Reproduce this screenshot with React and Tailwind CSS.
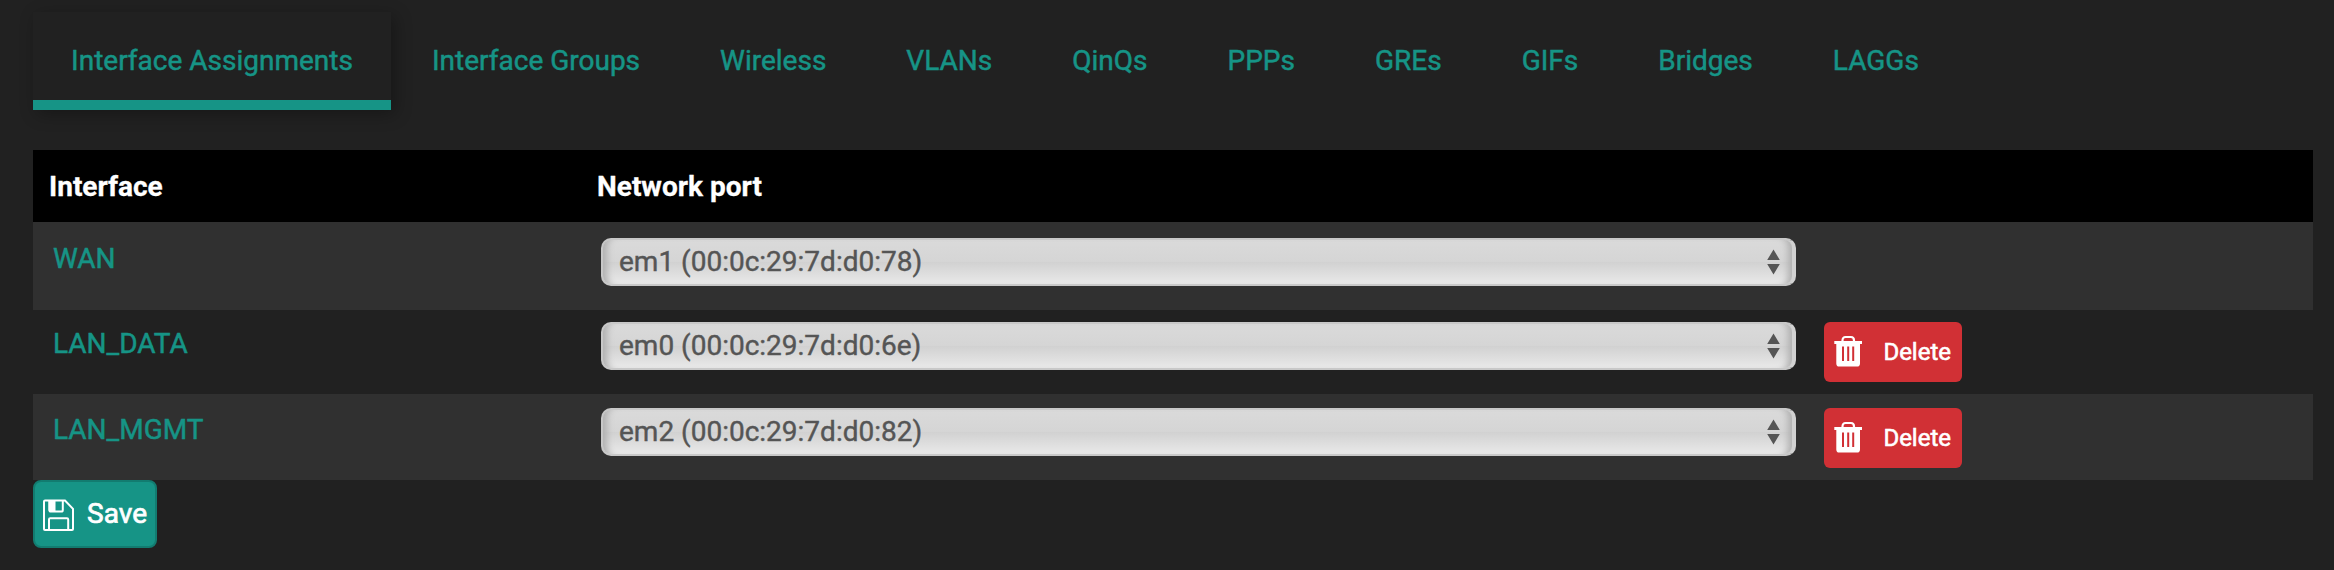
const tabs = ['Interface Groups', 'Wireless', 'VLANs', 'QinQs', 'PPPs', 'GREs', 'GIFs', 'Bridges', 'LAGGs'];

const rows = [
  { name: 'WAN', port: 'em1 (00:0c:29:7d:d0:78)', row: 'h-[88px] bg-[#303030] pt-4', link: 'mt-[5px]', removable: false },
  { name: 'LAN_DATA', port: 'em0 (00:0c:29:7d:d0:6e)', row: 'h-[84px] pt-3', link: 'mt-1.5', removable: true },
  { name: 'LAN_MGMT', port: 'em2 (00:0c:29:7d:d0:82)', row: 'h-[86px] bg-[#303030] pt-3.5', link: 'mt-1.5', removable: true },
];

function TrashIcon() {
  return (
    <svg className="-mt-0.5 h-8 w-7 shrink-0" viewBox="0 0 28 32" fill="none">
      <path d="M8.5 6.5V5.5C8.5 3.2 9.6 2 11.6 2H16.9C18.9 2 20 3.2 20 5.5V6.5" stroke="white" strokeWidth="2.2" />
      <path d="M0.3 6H28V9H26V28.5C26 30.6 25 31.6 23 31.6H5.2C3.2 31.6 2.3 30.6 2.3 28.5V9H0.3Z" fill="white" />
      <path d="M9 11.5V26M14.2 11.5V26M19.2 11.5V26" stroke="#d13035" strokeWidth="2" />
    </svg>
  );
}

function SaveIcon() {
  return (
    <svg className="h-8 w-8 shrink-0" viewBox="0 0 32 32" fill="none" stroke="white" strokeWidth="2">
      <path d="M1 2.5Q1 1.5 2 1.5H22L30 9.8V30Q30 31 29 31H2Q1 31 1 30Z" />
      <path d="M6.5 2V11Q6.5 12.6 7.9 12.6H18.3Q19.8 12.6 19.8 11V2" />
      <path d="M5.5 2H12.5V12.5H7Q5.5 12.5 5.5 11Z" fill="white" stroke="none" />
      <path d="M6 30.5V20.5Q6 19.3 7.2 19.3H24Q25.2 19.3 25.2 20.5V30.5" />
    </svg>
  );
}

function PortSelect({ value }) {
  return (
    <div className="flex h-12 w-[1195px] shrink-0 rounded-[10px] border-2 border-r-4 border-[#c8c8c8] border-r-[#d2d2d2] bg-[#c8c8c8]">
      <div className="flex flex-1 items-center justify-between rounded-lg bg-[linear-gradient(#dadada_0%,#d5d5d5_50%,#d1d1d1_50%,#e9e9e9_100%)] pr-3 pl-4 shadow-[inset_10px_0_7px_-6px_#b0b0b0,inset_-10px_0_7px_-6px_#b0b0b0]">
        <span className="text-[28px] leading-none text-[#555] [-webkit-text-stroke:0.4px_#555]">{value}</span>
        <svg className="-mt-px h-[26px] w-[13px]" viewBox="0 0 13 26" fill="#555">
          <path d="M6.5 0.5L12.8 11H0.2ZM0.2 15H12.8L6.5 25.5Z" />
        </svg>
      </div>
    </div>
  );
}

export default function App() {
  return (
    <div className="h-[570px] w-[2334px] overflow-hidden bg-[#212121] pt-3 pr-[21px] pl-[33px] font-[Roboto,sans-serif] text-[28px] text-[#169486]">
      <nav className="flex h-[98px] gap-1 leading-[57px] [-webkit-text-stroke:0.5px_#169486]">
        <a className="h-[98px] w-[358px] border-b-10 border-[#169486] pt-5 text-center whitespace-nowrap shadow-[4px_4px_16px_rgba(0,0,0,0.3)]">Interface Assignments</a>
        <div className="-ml-px flex gap-1">
          {tabs.map((tab) => (
            <a key={tab} className="px-[38px] pt-5 whitespace-nowrap">{tab}</a>
          ))}
        </div>
      </nav>
      <main className="mt-10">
        <div className="flex h-[72px] items-center bg-black px-4 pt-0.5 font-bold text-white [-webkit-text-stroke:0.3px_white]">
          <span className="w-[548px]">Interface</span>
          <span>Network port</span>
        </div>
        {rows.map((r) => (
          <div key={r.name} className={`flex items-start pl-5 ${r.row}`}>
            <a className={`w-[548px] shrink-0 leading-8 [-webkit-text-stroke:0.5px_#169486] ${r.link}`}>{r.name}</a>
            <PortSelect value={r.port} />
            {r.removable && (
              <button className="ml-7 flex h-[60px] w-[138px] items-center justify-between rounded-md bg-[#d13035] pr-[11px] pl-[10px] text-2xl text-white">
                <TrashIcon />
                <span className="[-webkit-text-stroke:0.6px_white]">Delete</span>
              </button>
            )}
          </div>
        ))}
        <button className="flex h-[68px] w-[124px] items-center justify-between rounded-lg border-2 border-[#127c70] bg-[#169486] px-2 pt-0.5 text-white">
          <SaveIcon />
          <span className="-mt-0.5 [-webkit-text-stroke:0.7px_white]">Save</span>
        </button>
      </main>
    </div>
  );
}
